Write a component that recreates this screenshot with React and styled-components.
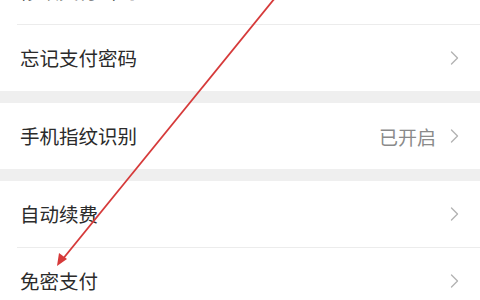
import React from "react";
import styled, { createGlobalStyle } from "styled-components";

const Global = createGlobalStyle`
  html, body { margin: 0; padding: 0; background: #ffffff; overflow: hidden; }
  body { font-family: "Noto Sans CJK SC", "Noto Sans", sans-serif; }
`;

const Screen = styled.div`
  position: relative;
  width: 480px;
  height: 300px;
  overflow: hidden;
  background: #ffffff;
`;

const List = styled.div`
  display: flex;
  flex-direction: column;
  margin-top: -42px;
`;

const Group = styled.div`
  display: flex;
  flex-direction: column;
  background: #ffffff;
`;

const Band = styled.div`
  height: ${(p) => p.$h || 12}px;
  background: #efefef;
`;

const Row = styled.div`
  position: relative;
  height: 66px;
  display: flex;
  align-items: center;
  padding: 0 21px 0 20px;
  margin-top: ${(p) => (p.$divided ? 1 : 0)}px;
  &::before {
    content: "";
    display: ${(p) => (p.$divided ? "block" : "none")};
    position: absolute;
    top: -1px;
    left: 17px;
    right: 0;
    height: 1px;
    background: #ececec;
  }
`;

const Label = styled.span`
  flex: 1;
  font-size: 19.5px;
  color: #2b2b2b;
  letter-spacing: 0;
  line-height: 1;
`;

const Value = styled.span`
  font-size: 19px;
  color: #8a8a8a;
  margin-right: 14px;
  line-height: 1;
`;

const Chevron = () => (
  <svg width="9" height="14" viewBox="0 0 9 14" style={{ display: "block" }}>
    <polyline points="1.5,1 7.5,7 1.5,13" fill="none" stroke="#b3b3b3" strokeWidth="1.4" strokeLinecap="round" strokeLinejoin="round" />
  </svg>
);

const ArrowLayer = styled.svg`
  position: absolute;
  left: 0;
  top: 0;
  pointer-events: none;
`;

const Item = ({ label, value, divided }) => (
  <Row $divided={divided}>
    <Label>{label}</Label>
    {value && <Value>{value}</Value>}
    <Chevron />
  </Row>
);

export default function App() {
  return (
    <>
      <Global />
      <Screen>
        <List>
          <Group>
            <Item label="修改支付密码" />
            <Item label="忘记支付密码" divided />
          </Group>
          <Band $h={12} />
          <Group>
            <Item label="手机指纹识别" value="已开启" />
          </Group>
          <Band $h={12} />
          <Group>
            <Item label="自动续费" />
            <Item label="免密支付" divided />
          </Group>
        </List>
        <ArrowLayer width="480" height="300" viewBox="0 0 480 300">
          <line x1="275" y1="-2" x2="62" y2="260" stroke="#d63a3a" strokeWidth="1.8" />
          <polygon points="57,266 59,253 67,259" fill="#d63a3a" />
        </ArrowLayer>
      </Screen>
    </>
  );
}
